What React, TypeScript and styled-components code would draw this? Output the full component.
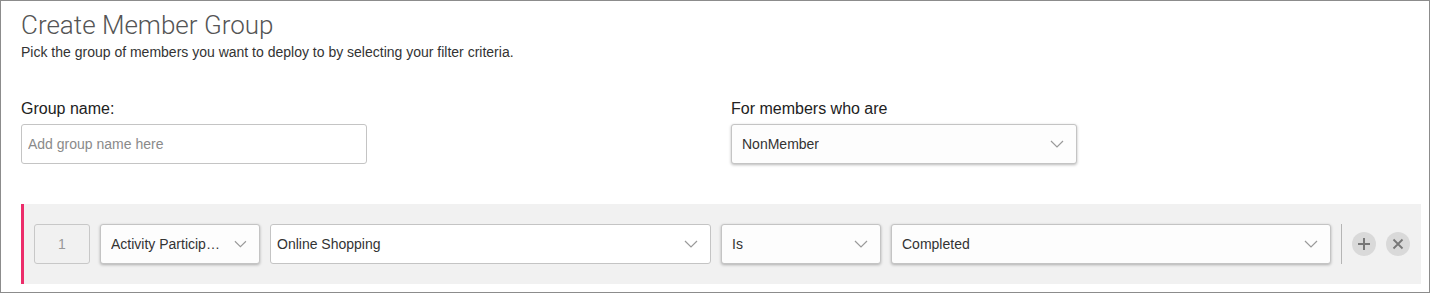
import React from 'react';
import styled, {createGlobalStyle} from 'styled-components';

const GlobalStyle = createGlobalStyle`
    html, body {
        margin: 0;
        padding: 0;
        background: #fff;
    }
    body {
        font-family: "Liberation Sans", Arial, sans-serif;
        color: #333;
    }
`;

const Page = styled.div`
    box-sizing: border-box;
    width: 1430px;
    height: 293px;
    border: 1px solid #8c8c8c;
    padding: 9px 8px 0 20px;
`;

const Title = styled.h1`
    margin: 0;
    font-family: Roboto, "Liberation Sans", sans-serif;
    font-weight: 300;
    font-size: 26px;
    line-height: 30px;
    color: #555;
`;

const Subtitle = styled.p`
    margin: 4px 0 0;
    font-size: 14px;
    line-height: 16px;
    color: #333;
`;

const FieldsRow = styled.div`
    display: flex;
    margin-top: 39px;
`;

const Field = styled.div<{ $width: number }>`
    display: flex;
    flex-direction: column;
    width: ${p => p.$width}px;
`;

const Label = styled.label`
    font-size: 16px;
    line-height: 20px;
    color: #222;
    margin-bottom: 5px;
`;

const TextInput = styled.input`
    box-sizing: border-box;
    width: 346px;
    height: 40px;
    border: 1px solid #c4c4c4;
    border-radius: 3px;
    padding: 0 6px;
    font-family: "Liberation Sans", Arial, sans-serif;
    font-size: 14px;
    color: #333;
    outline: none;
    &::placeholder {
        color: #8a8a8a;
    }
`;

const SelectBox = styled.div<{ $width: number; $flat?: boolean; $pad?: number }>`
    box-sizing: border-box;
    display: flex;
    align-items: center;
    justify-content: space-between;
    width: ${p => p.$width}px;
    height: 40px;
    flex-shrink: 0;
    padding: 0 12px 0 ${p => p.$pad ?? 10}px;
    border: 1px solid #c4c4c4;
    border-radius: 3px;
    background: ${p => (p.$flat ? '#fff' : '#fdfdfd')};
    box-shadow: ${p => (p.$flat ? 'none' : '0 1px 3px rgba(0, 0, 0, 0.28)')};
    font-size: 14px;
    color: #333;
`;

const SelectText = styled.span`
    white-space: nowrap;
    overflow: hidden;
    text-overflow: ellipsis;
    margin-right: 8px;
`;

const FilterStrip = styled.div`
    display: flex;
    align-items: center;
    gap: 10px;
    box-sizing: border-box;
    width: 1400px;
    height: 80px;
    margin-top: 40px;
    padding: 0 10px;
    background: #f1f1f1;
    border-left: 3px solid #ec2d6a;
`;

const IndexBox = styled.div`
    box-sizing: border-box;
    display: flex;
    align-items: center;
    justify-content: center;
    width: 56px;
    height: 40px;
    flex-shrink: 0;
    border: 1px solid #c8c8c8;
    border-radius: 3px;
    font-size: 14px;
    color: #999;
`;

const Divider = styled.div`
    width: 1px;
    height: 40px;
    background: #b5b5b5;
    flex-shrink: 0;
`;

const RoundButton = styled.button`
    display: flex;
    align-items: center;
    justify-content: center;
    width: 24px;
    height: 24px;
    padding: 0;
    border: none;
    border-radius: 50%;
    background: #d9d9d9;
    flex-shrink: 0;
`;

const Chevron: React.FC = () => (
    <svg width="14" height="8" viewBox="0 0 14 8" fill="none">
        <path d="M1 1l6 6 6-6" stroke="#9a9a9a" strokeWidth="1.2"/>
    </svg>
);

const Select: React.FC<{ value: string; width: number; flat?: boolean; pad?: number }> = ({value, width, flat, pad}) => (
    <SelectBox $width={width} $flat={flat} $pad={pad}>
        <SelectText>{value}</SelectText>
        <Chevron/>
    </SelectBox>
);

const App: React.FC = () => (
    <>
        <GlobalStyle/>
        <Page>
            <Title>Create Member Group</Title>
            <Subtitle>Pick the group of members you want to deploy to by selecting your filter criteria.</Subtitle>
            <FieldsRow>
                <Field $width={710}>
                    <Label>Group name:</Label>
                    <TextInput placeholder="Add group name here"/>
                </Field>
                <Field $width={346}>
                    <Label>For members who are</Label>
                    <Select value="NonMember" width={346}/>
                </Field>
            </FieldsRow>
            <FilterStrip>
                <IndexBox>1</IndexBox>
                <Select value="Activity Participation" width={160}/>
                <Select value="Online Shopping" width={441} flat pad={6}/>
                <Select value="Is" width={160}/>
                <Select value="Completed" width={440}/>
                <Divider/>
                <RoundButton aria-label="add">
                    <svg width="14" height="14" viewBox="0 0 14 14">
                        <path d="M7 1v12M1 7h12" stroke="#777" strokeWidth="2"/>
                    </svg>
                </RoundButton>
                <RoundButton aria-label="remove">
                    <svg width="12" height="12" viewBox="0 0 12 12">
                        <path d="M1.5 1.5l9 9M10.5 1.5l-9 9" stroke="#777" strokeWidth="1.8"/>
                    </svg>
                </RoundButton>
            </FilterStrip>
        </Page>
    </>
);

export default App;
